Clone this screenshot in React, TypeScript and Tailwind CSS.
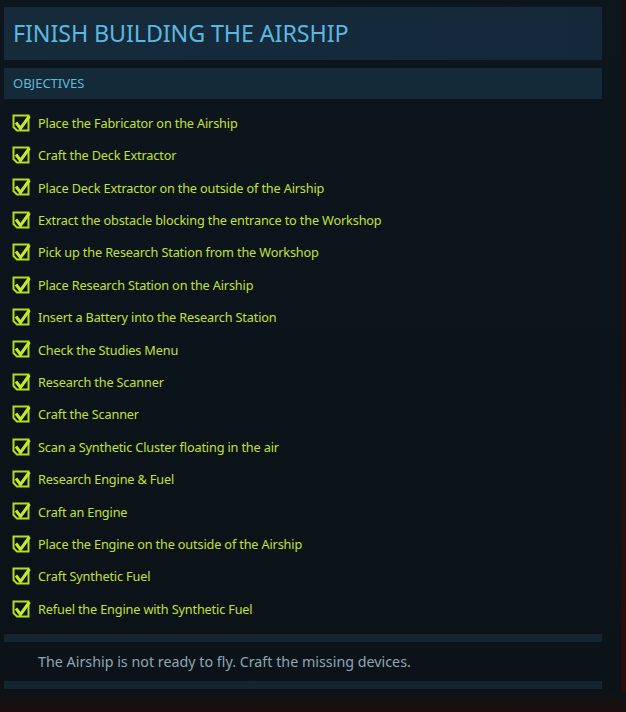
import React from 'react';

const objectives = [
  'Place the Fabricator on the Airship',
  'Craft the Deck Extractor',
  'Place Deck Extractor on the outside of the Airship',
  'Extract the obstacle blocking the entrance to the Workshop',
  'Pick up the Research Station from the Workshop',
  'Place Research Station on the Airship',
  'Insert a Battery into the Research Station',
  'Check the Studies Menu',
  'Research the Scanner',
  'Craft the Scanner',
  'Scan a Synthetic Cluster floating in the air',
  'Research Engine & Fuel',
  'Craft an Engine',
  'Place the Engine on the outside of the Airship',
  'Craft Synthetic Fuel',
  'Refuel the Engine with Synthetic Fuel',
];

const CheckBox: React.FC = () => (
  <svg width="19" height="19" viewBox="0 0 19 19" className="shrink-0">
    <path d="M1.5 1.5 H16.5 V16.5 H5 L1.5 13 Z" fill="none" stroke="#b6dc1e" strokeWidth="2" />
    <path d="M4 8.5 L8.5 14.5 L17.5 2" fill="none" stroke="#c8ea2a" strokeWidth="3" strokeLinejoin="miter" />
  </svg>
);

const App: React.FC = () => {
  return (
    <div
      className="relative w-[626px] h-[712px] overflow-hidden bg-gradient-to-b from-[#0d161d] via-[#0b141a] to-[#0c1318]"
      style={{ fontFamily: '"Noto Sans", "Open Sans", sans-serif' }}
    >
      <div className="absolute right-0 top-0 bottom-0 w-[5px] bg-gradient-to-b from-[#1a0f0e] to-[#2a0f0c]" />
      <div className="absolute left-0 right-0 bottom-0 h-[20px] bg-gradient-to-b from-[#0c1318] to-[#1c0d0b]" />

      <div className="relative ml-[4px] w-[598px] pt-[7px] flex flex-col">
        <div className="h-[53px] bg-gradient-to-r from-[#152b3a] to-[#14283a] flex items-center px-[9px]">
          <h1 className="text-[23.3px] leading-none text-[#5cb8e0] tracking-[-0.1px]">FINISH BUILDING THE AIRSHIP</h1>
        </div>

        <div className="mt-[8px] h-[31px] bg-[#152a39] flex items-center px-[9px]">
          <span className="text-[13px] leading-none text-[#62b8dc]">OBJECTIVES</span>
        </div>

        <ul className="mt-[8px] flex flex-col">
          {objectives.map((o) => (
            <li key={o} className="h-[32.4px] flex items-center gap-[7px] pl-[8px]">
              <CheckBox />
              <span className="text-[12.7px] leading-none text-[#c4e03a] tracking-[-0.15px]">{o}</span>
            </li>
          ))}
        </ul>

        <div className="mt-[9px] h-[8px] bg-[#13252f]" />
        <div className="h-[39px] flex items-center pl-[34px]">
          <span className="text-[14.3px] leading-none text-[#8ea6b4]">
            The Airship is not ready to fly. Craft the missing devices.
          </span>
        </div>
        <div className="h-[8px] bg-[#13252f]" />
      </div>
    </div>
  );
};

export default App;
